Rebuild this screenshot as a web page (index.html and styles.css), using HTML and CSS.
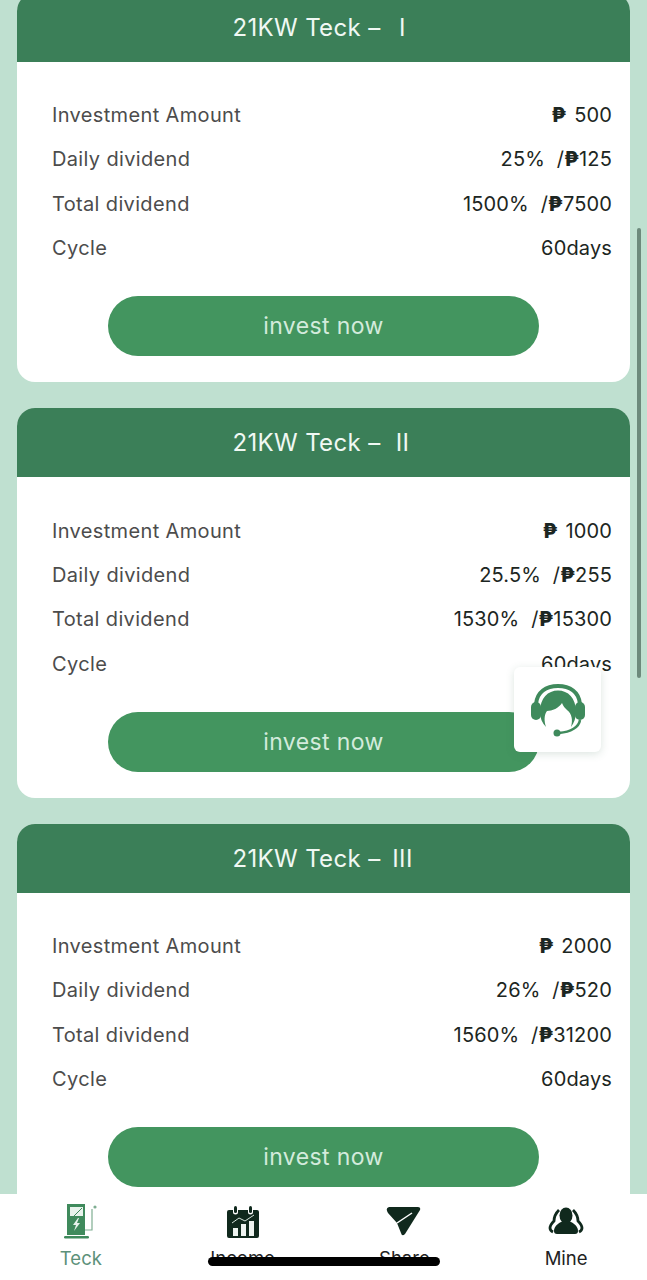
FILE: index.html
```html
<!DOCTYPE html>
<html lang="en">
<head>
    <meta charset="UTF-8">
    <meta name="viewport" content="width=device-width, initial-scale=1.0">
    <title>Teck</title>
    <link rel="stylesheet" href="styles.css">
</head>
<body>
    <div class="plan-list">
        <div class="plan-card">
            <div class="plan-title"><span>21KW Teck –</span><span class="plan-num">I</span></div>
            <div class="plan-body">
                <div class="plan-row"><span class="label">Investment Amount</span><span class="value"><b>₱</b> 500</span></div>
                <div class="plan-row"><span class="label">Daily dividend</span><span class="value">25% <span class="sep">/</span><b>₱</b>125</span></div>
                <div class="plan-row"><span class="label">Total dividend</span><span class="value">1500% <span class="sep">/</span><b>₱</b>7500</span></div>
                <div class="plan-row"><span class="label">Cycle</span><span class="value">60days</span></div>
                <button class="invest-btn">invest now</button>
            </div>
        </div>
        <div class="plan-card">
            <div class="plan-title"><span>21KW Teck –</span><span class="plan-num">II</span></div>
            <div class="plan-body">
                <div class="plan-row"><span class="label">Investment Amount</span><span class="value"><b>₱</b> 1000</span></div>
                <div class="plan-row"><span class="label">Daily dividend</span><span class="value">25.5% <span class="sep">/</span><b>₱</b>255</span></div>
                <div class="plan-row"><span class="label">Total dividend</span><span class="value">1530% <span class="sep">/</span><b>₱</b>15300</span></div>
                <div class="plan-row"><span class="label">Cycle</span><span class="value">60days</span></div>
                <button class="invest-btn">invest now</button>
            </div>
        </div>
        <div class="plan-card">
            <div class="plan-title"><span>21KW Teck –</span><span class="plan-num">III</span></div>
            <div class="plan-body">
                <div class="plan-row"><span class="label">Investment Amount</span><span class="value"><b>₱</b> 2000</span></div>
                <div class="plan-row"><span class="label">Daily dividend</span><span class="value">26% <span class="sep">/</span><b>₱</b>520</span></div>
                <div class="plan-row"><span class="label">Total dividend</span><span class="value">1560% <span class="sep">/</span><b>₱</b>31200</span></div>
                <div class="plan-row"><span class="label">Cycle</span><span class="value">60days</span></div>
                <button class="invest-btn">invest now</button>
            </div>
        </div>
    </div>

    <div class="scroll-thumb"></div>

    <!-- customer service button -->
    <div class="support-btn">
        <svg width="56" height="56" viewBox="0 0 56 56">
            <path d="M6 22C7 10 16 4 28 4s21 6 22 18" fill="none" stroke="#3f8a5c" stroke-width="4"/>
            <path d="M10 30C10 16 18 8.500 28 8.500S46 16 46 30c0 6-2 11-5 15 2-7 1-13-4-17-2-2-4-4-5-7-3 5-10 8-15 8-3 4-3 10-1 16-4-4-6-9-6-15z" fill="#3f8a5c"/>
            <rect x="1" y="20" width="10" height="18" rx="5" fill="#3f8a5c"/>
            <rect x="45" y="20" width="10" height="18" rx="5" fill="#3f8a5c"/>
            <path d="M50 38c-1 7-9 12-21 13" fill="none" stroke="#3f8a5c" stroke-width="2.500"/>
            <circle cx="27" cy="51" r="3.500" fill="#3f8a5c"/>
        </svg>
    </div>

    <nav class="tab-bar">
        <div class="tab active">
            <svg width="36" height="36" viewBox="0 0 36 36">
                <rect x="4" y="1" width="18" height="31" fill="#3f8a5c"/>
                <path d="M7 4h13v9H7z" fill="#e8f3ec"/>
                <path d="M11 13l8-8" stroke="#3f8a5c" stroke-width="1"/>
                <path d="M15 15l-5 7h3l-2 6 6-8h-3l2-5z" fill="#e8f3ec"/>
                <rect x="1" y="33" width="25" height="2.500" rx="1.200" fill="#3f8a5c"/>
                <path d="M22 27h7V6" fill="none" stroke="#7fae92" stroke-width="1.200"/>
                <circle cx="32" cy="4" r="1.600" fill="#7fae92"/>
            </svg>
            <span>Teck</span>
        </div>
        <div class="tab">
            <svg width="36" height="36" viewBox="0 0 36 36">
                <path d="M4 7h4v2a2 2 0 0 0 5 0V7h10v2a2 2 0 0 0 5 0V7h4a2 2 0 0 1 2 2v24a2 2 0 0 1-2 2H4a2 2 0 0 1-2-2V9a2 2 0 0 1 2-2z" fill="#10291d"/>
                <rect x="9" y="3" width="3" height="7" rx="1.500" fill="#10291d"/>
                <rect x="24" y="3" width="3" height="7" rx="1.500" fill="#10291d"/>
                <path d="M7 20l7-5 6 3 9-6" fill="none" stroke="#d6e4dc" stroke-width="1"/>
                <rect x="8" y="25" width="5" height="8" fill="#eef4f0"/>
                <rect x="16" y="21" width="5" height="12" fill="#eef4f0"/>
                <rect x="24" y="18" width="5" height="15" fill="#eef4f0"/>
            </svg>
            <span>Income</span>
        </div>
        <div class="tab">
            <svg width="36" height="36" viewBox="0 0 36 36">
                <path d="M3 4h29q3 0 2 3L19 31q-3 3-4-1l-4-10-9-10Q-1 5 3 4z" fill="#10291d"/>
                <path d="M11 20l15-10" stroke="#fff" stroke-width="1.500"/>
            </svg>
            <span>Share</span>
        </div>
        <div class="tab">
            <svg width="36" height="36" viewBox="0 0 36 36">
                <path d="M11 7C7 11 6 15 6 18c-2 2-4 5-4 7s1 3 3 4M25 7c4 4 5 8 5 11 2 2 4 5 4 7s-1 3-3 4" fill="none" stroke="#10291d" stroke-width="2.800"/>
                <ellipse cx="18" cy="12.500" rx="6.500" ry="8" fill="#10291d"/>
                <path d="M13 19c-4 2-7 5-7 9 0 2 1 3 3 3h18c2 0 3-1 3-3 0-4-3-7-7-9z" fill="#10291d"/>
            </svg>
            <span>Mine</span>
        </div>
    </nav>
    <div class="home-bar"></div>
</body>
</html>
```
FILE: styles.css
```css
html, body {
    margin: 0;
    padding: 0;
    height: 1280px;
    overflow: hidden;
}
body {
    font-family: Inter, "Noto Sans", sans-serif;
    background-color: #bfe0d0;
    position: relative;
}
.plan-list {
    display: flex;
    flex-direction: column;
    gap: 26.3px;
    margin: -7px 17px 0;
}
.plan-card {
    background-color: #fff;
    border-radius: 18px;
    overflow: hidden;
}
.plan-title {
    height: 69px;
    display: flex;
    align-items: center;
    justify-content: center;
    background-color: #3b7f58;
    color: #f0f8f3;
    font-size: 24px;
    letter-spacing: 0.35px;
}
.plan-num {
    width: 24px;
    margin-left: 10px;
    text-align: center;
}
.plan-body {
    padding: 31px 18px 26px 35px;
    display: flex;
    flex-direction: column;
}
.plan-row {
    display: flex;
    justify-content: space-between;
    align-items: center;
    height: 44.3px;
    font-size: 20px;
}
.label {
    color: #4c4c4c;
    letter-spacing: 0.35px;
}
.value {
    color: #1c2622;
    letter-spacing: 0.15px;
    word-spacing: 2px;
}
.value b {
    font-weight: 800;
}
.sep {
    margin-left: 4px;
}
.invest-btn {
    display: block;
    width: 431px;
    height: 60px;
    margin: 26px 0 0 56px;
    border: none;
    border-radius: 30px;
    background-color: #43955f;
    color: #d3ebdc;
    font-family: inherit;
    font-size: 23px;
    letter-spacing: 0.4px;
}
.scroll-thumb {
    position: absolute;
    left: 637px;
    top: 228px;
    width: 4px;
    height: 450px;
    border-radius: 2px;
    background-color: #6d8a7c;
}
.support-btn {
    position: absolute;
    left: 514px;
    top: 667px;
    width: 87px;
    height: 85px;
    display: flex;
    align-items: center;
    justify-content: center;
    background-color: #fff;
    border-radius: 6px;
    box-shadow: 0 2px 8px rgba(60, 110, 85, 0.18);
}
.tab-bar {
    position: absolute;
    left: 0;
    right: 0;
    bottom: 0;
    height: 86px;
    display: flex;
    background-color: #fff;
}
.tab {
    flex: 1;
    display: flex;
    flex-direction: column;
    align-items: center;
    padding-top: 9px;
    color: #222;
    font-size: 18.5px;
}
.tab span {
    margin-top: 8px;
}
.tab.active {
    color: #5d917a;
}
.home-bar {
    position: absolute;
    left: 208px;
    top: 1257px;
    width: 232px;
    height: 9px;
    border-radius: 5px;
    background-color: #000;
}
```
